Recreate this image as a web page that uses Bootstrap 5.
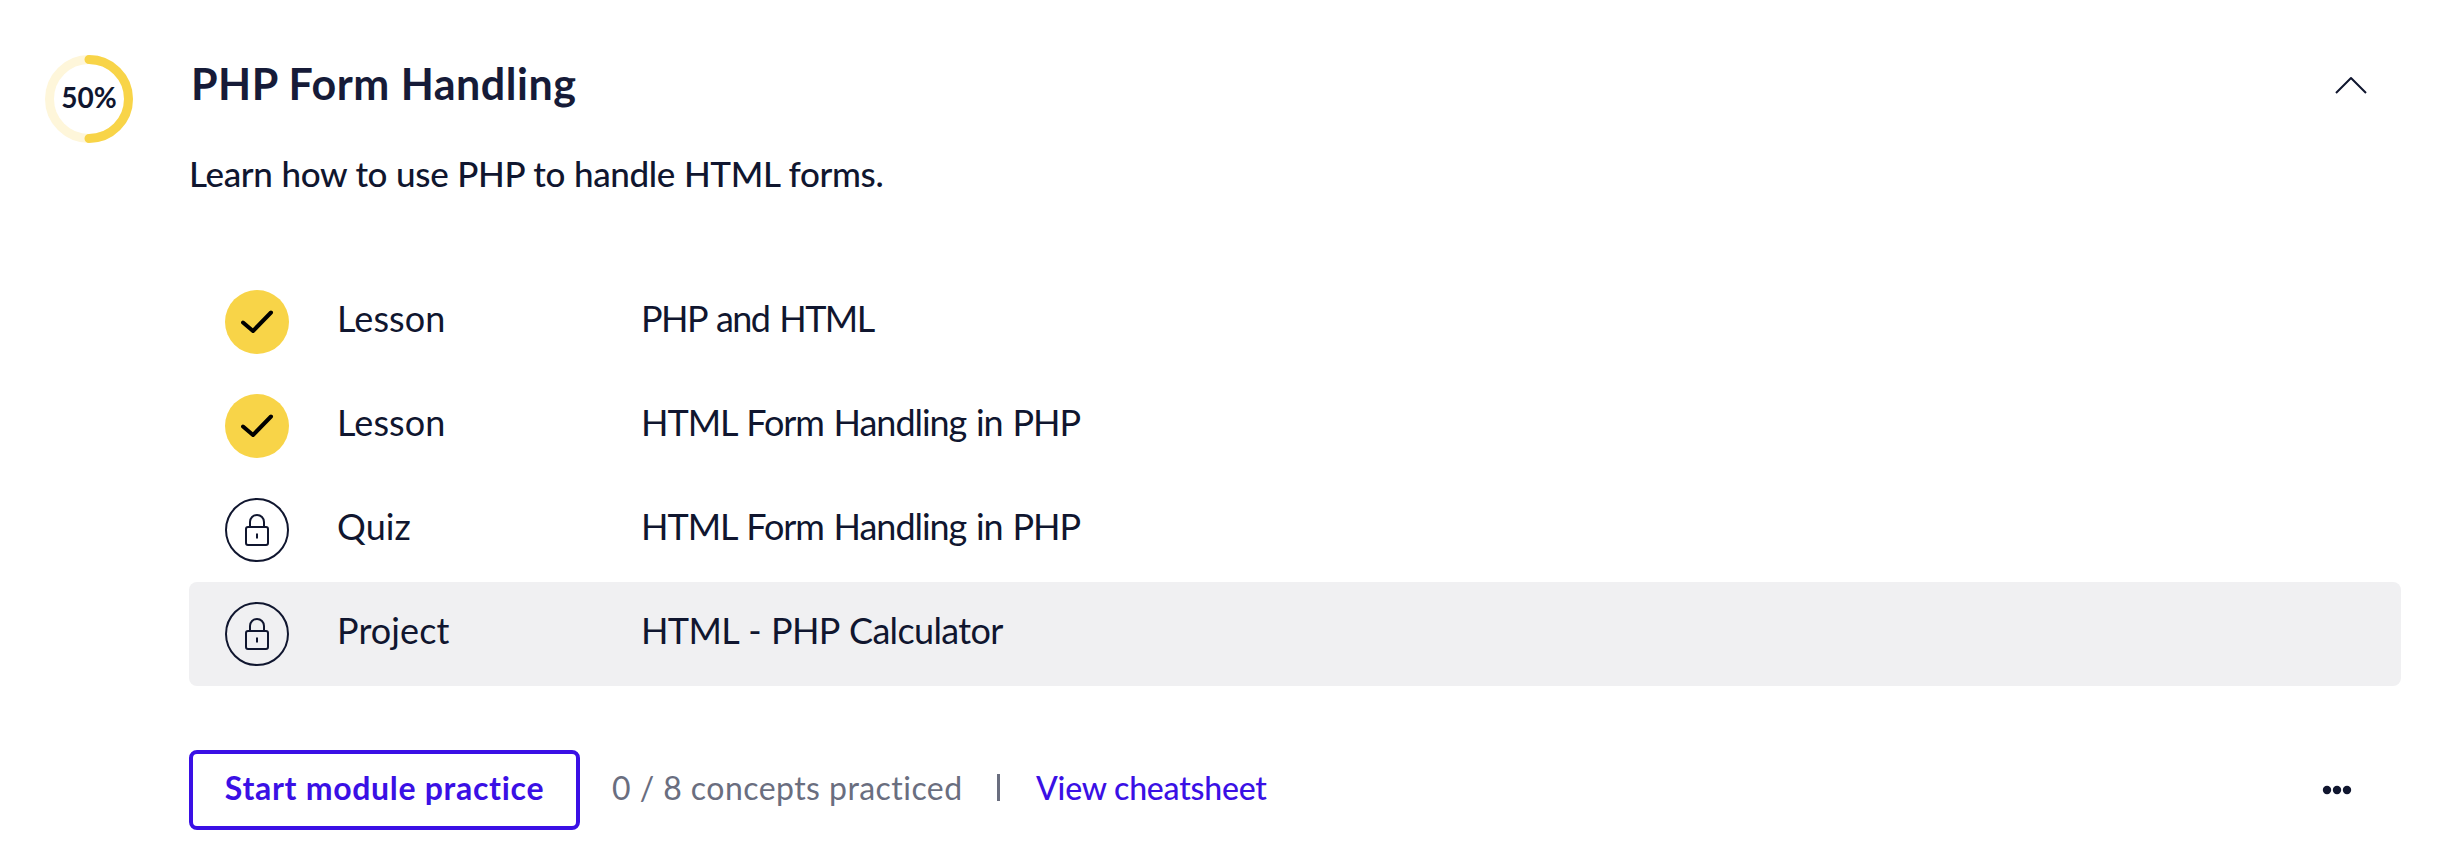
<!DOCTYPE html>
<html lang="en">
<head>
<meta charset="utf-8">
<title>PHP Form Handling</title>
<link href="https://cdn.jsdelivr.net/npm/bootstrap@5.3.0/dist/css/bootstrap.min.css" rel="stylesheet">
<style>
  body { font-family: Lato, "Liberation Sans", sans-serif; color: #10162f; background: #fff; font-variant-ligatures: none; }
  .module { padding: 55px 41px 0 45px; gap: 56px; }
  .ring { width: 88px; height: 88px; }
  .ring svg { display: block; }
  .ring-label { font-size: 28px; font-weight: 700; letter-spacing: 0; line-height: 88px; top: -2px; }
  .module-head { height: 56px; padding: 3px 34px 0 2px; }
  .module-title { font-size: 43px; font-weight: 700; line-height: 52px; letter-spacing: .5px; color: #161b38; }
  .chevron { margin-top: 17px; }
  .summary { font-size: 35px; font-weight: 500; line-height: 42px; letter-spacing: -.35px; word-spacing: .4px; margin: 41px 0 76px; }
  .lesson { height: 104px; padding-left: 36px; font-size: 36px; border-radius: 8px; }
  .lesson.is-current { background: #f0f0f2; }
  .lesson svg { width: 64px; height: 64px; margin-right: 48px; }
  .kind { width: 304px; padding-bottom: 8px; letter-spacing: .1px; }
  .name { padding-bottom: 8px; letter-spacing: -1.05px; word-spacing: 1.6px; }
  .tight { letter-spacing: -1.6px; word-spacing: 2.4px; }
  .loose { letter-spacing: -.65px; word-spacing: 1.6px; }
  .module-foot { margin-top: 64px; height: 80px; font-size: 32px; padding-right: 48px; }
  .practice { width: 391px; height: 80px; border: 4px solid #3a10e5; border-radius: 8px; color: #3a10e5; font-size: 32px; font-weight: 700; letter-spacing: .7px; padding: 0 0 5px; line-height: 1; }
  .practice:hover { color: #fff; background: #3a10e5; }
  .count { width: 352px; margin-left: 32px; color: #6a6e7f; letter-spacing: .45px; padding-bottom: 5px; }
  .rule { width: 3px; height: 27px; background: #6a6e7f; margin: 0 36px 5px 33px; }
  .sheet { color: #3a10e5; font-weight: 500; letter-spacing: -.2px; padding-bottom: 5px; }
</style>
</head>
<body>
<svg class="d-none" aria-hidden="true">
  <symbol id="done" viewBox="0 0 64 64">
    <circle cx="32" cy="32" r="32" fill="#f8d448"/>
    <path d="M18 32.500l10 8.500 18-18.500" fill="none" stroke="#000" stroke-width="4" stroke-linecap="round" stroke-linejoin="round"/>
  </symbol>
  <symbol id="locked" viewBox="0 0 64 64">
    <g fill="none" stroke="#10162f" stroke-width="2">
      <circle cx="32" cy="32" r="31"/>
      <rect x="21" y="29" width="22" height="18" rx="2"/>
      <path d="M25 29v-5a7 7 0 0 1 14 0v5M32 35.500v5"/>
    </g>
  </symbol>
</svg>
<section class="module d-flex align-items-start">
  <div class="ring position-relative flex-shrink-0">
    <svg width="88" height="88" viewBox="0 0 88 88" fill="none" stroke-width="9">
      <circle cx="44" cy="44" r="39.500" stroke="#fef6da"/>
      <path d="M44 4.500a39.500 39.500 0 0 1 0 79" stroke="#f8d448" stroke-linecap="round"/>
    </svg>
    <div class="ring-label position-absolute start-0 w-100 text-center">50%</div>
  </div>
  <div class="flex-grow-1">
    <header class="module-head d-flex justify-content-between align-items-start">
      <h2 class="module-title m-0">PHP Form Handling</h2>
      <svg class="chevron" width="32" height="20" viewBox="0 0 32 20" fill="none" stroke="#10162f" stroke-width="2"><path d="M1 18L16 3l15 15" stroke-linejoin="round"/></svg>
    </header>
    <p class="summary">Learn how to use PHP to handle HTML forms.</p>
    <ul class="list-unstyled m-0">
      <li class="lesson d-flex align-items-center"><svg><use href="#done"/></svg><span class="kind">Lesson</span><span class="name tight">PHP and HTML</span></li>
      <li class="lesson d-flex align-items-center"><svg><use href="#done"/></svg><span class="kind">Lesson</span><span class="name">HTML Form Handling in PHP</span></li>
      <li class="lesson d-flex align-items-center"><svg><use href="#locked"/></svg><span class="kind">Quiz</span><span class="name">HTML Form Handling in PHP</span></li>
      <li class="lesson is-current d-flex align-items-center"><svg><use href="#locked"/></svg><span class="kind">Project</span><span class="name loose">HTML - PHP Calculator</span></li>
    </ul>
    <footer class="module-foot d-flex align-items-center">
      <button type="button" class="btn practice">Start module practice</button>
      <span class="count text-nowrap">0 / 8 concepts practiced</span>
      <span class="rule"></span>
      <a href="#" class="sheet text-decoration-none">View cheatsheet</a>
      <svg class="ms-auto" width="36" height="12" viewBox="0 0 36 12" fill="#10162f"><circle cx="10" cy="6" r="4.200"/><circle cx="20" cy="6" r="4.200"/><circle cx="30" cy="6" r="4.200"/></svg>
    </footer>
  </div>
</section>
<script src="https://cdn.jsdelivr.net/npm/bootstrap@5.3.0/dist/js/bootstrap.bundle.min.js"></script>
</body>
</html>
